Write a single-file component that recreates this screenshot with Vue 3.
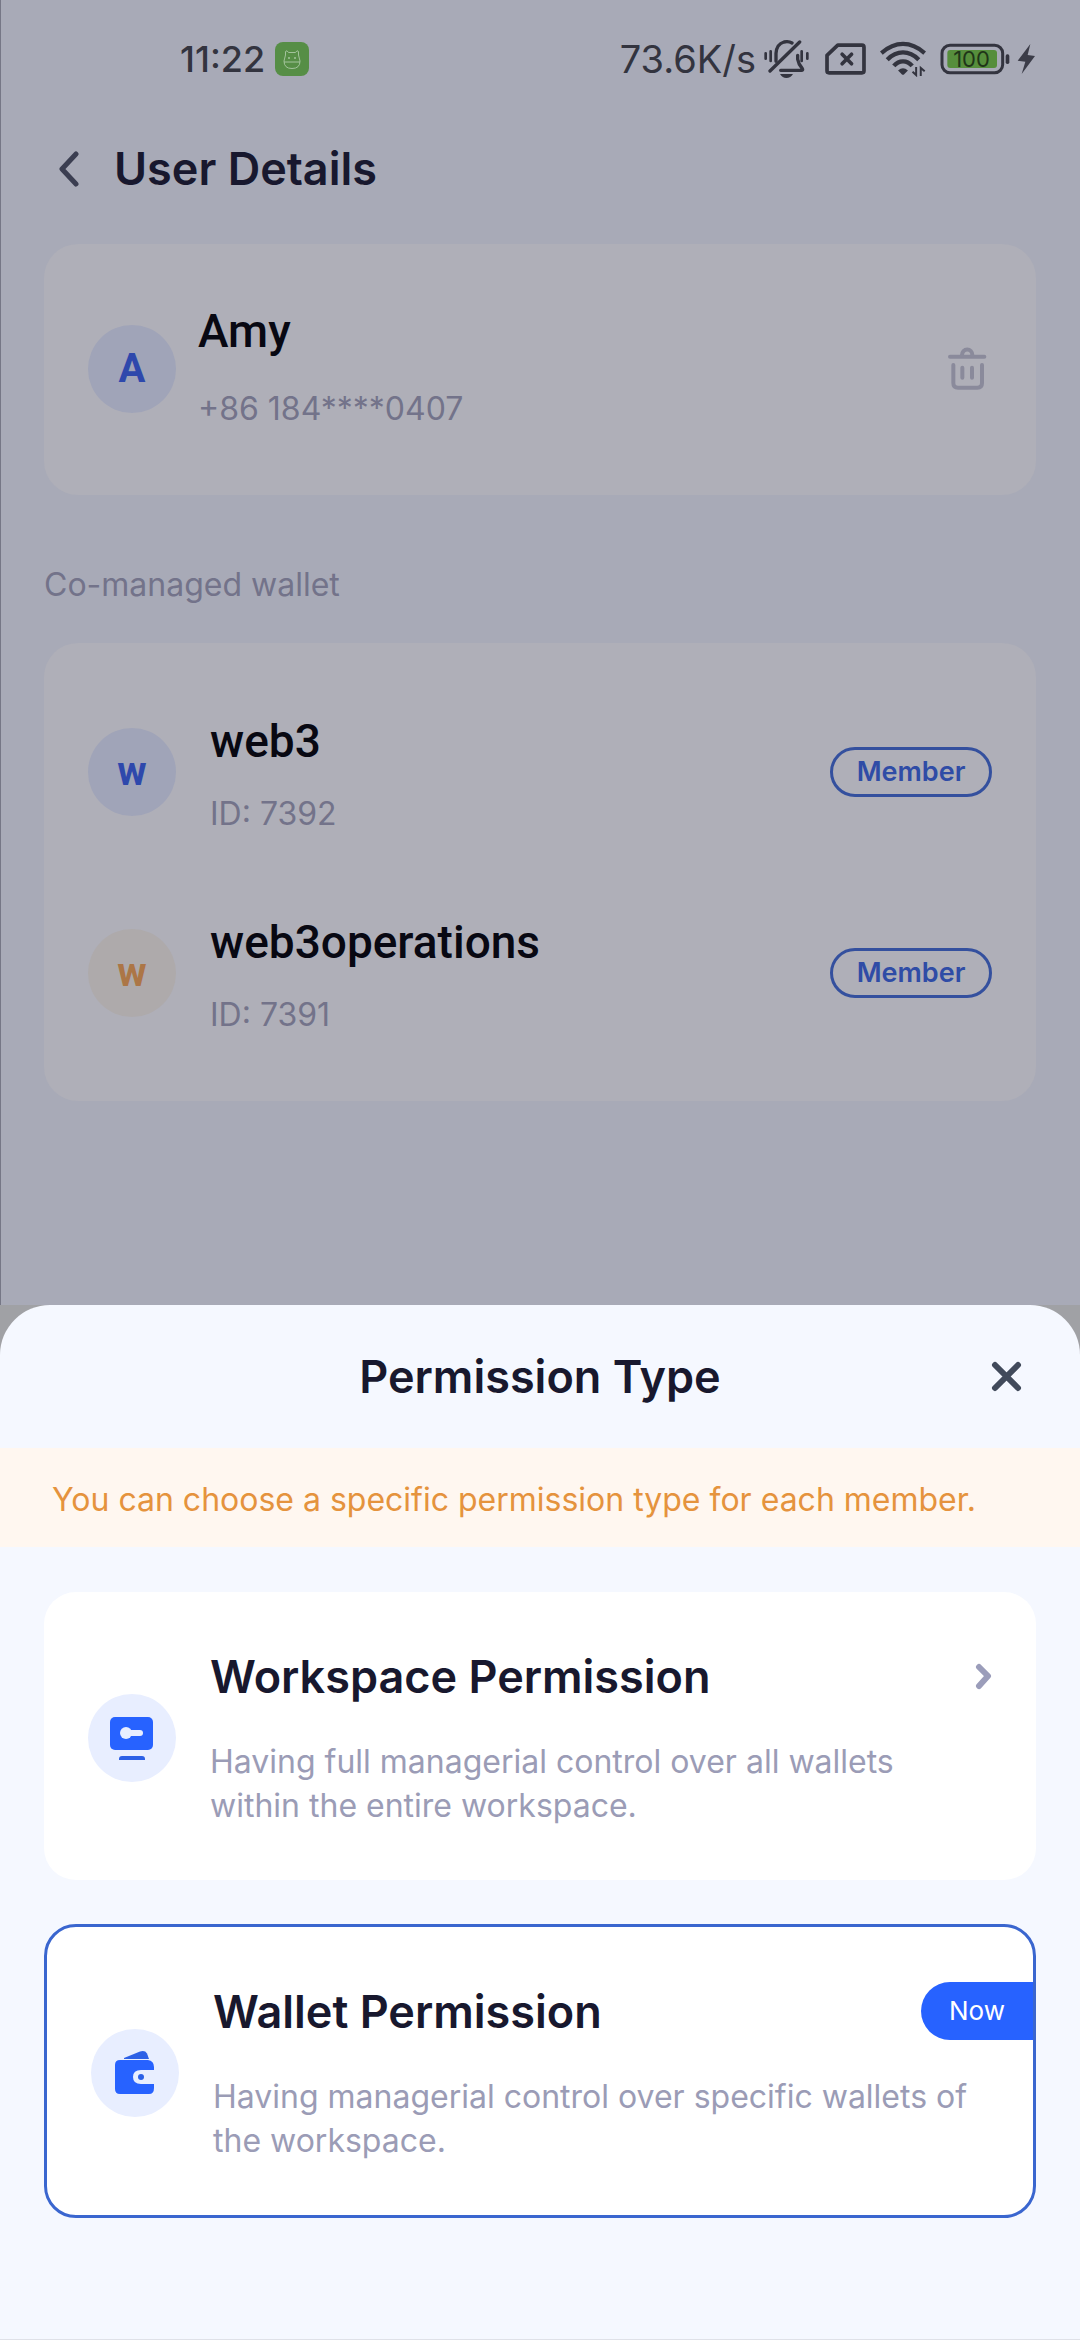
<script setup>
const wallets = [
  { name: 'web3', id: '7392', tone: 'blue' },
  { name: 'web3operations', id: '7391', tone: 'orange' },
]
</script>

<template>
  <div class="page">
    <main class="details">
      <div class="status">
        <div class="status-left">
          <span class="time">11:22</span>
          <svg class="app-icon" width="34" height="34" viewBox="0 0 34 34">
            <rect width="34" height="34" rx="8" fill="#568e46" />
            <g fill="none" stroke="#a3c39c" stroke-width="1">
              <path d="M10.500 13V9.500Q12 7.500 13.500 10.500H20.500Q22 7.500 23.500 9.500V13L25 19Q25 26.500 17 26.500Q9 26.500 9 19Z" />
              <path d="M9 20H25" />
            </g>
            <circle cx="14" cy="16" r="1" fill="#a3c39c" />
            <circle cx="20" cy="16" r="1" fill="#a3c39c" />
          </svg>
        </div>
        <div class="status-right">
          <span class="speed">73.6K/s</span>
          <svg class="bell" width="45" height="38" viewBox="0 0 135 114" fill="none" stroke="currentColor" stroke-width="10" stroke-linecap="round">
            <path d="M18 93L107 6" />
            <path d="M36 64V40Q38 12 60 6Q74 3 84 9" />
            <path d="M101 46V58Q103 72 115 86Q118 91 112 91H50" />
            <path d="M5 40V56M20 34V63M113 34V63M130 40V56" stroke-width="8" />
            <path d="M48 102H87Q80 114 67 114Q55 114 48 102Z" fill="currentColor" stroke="none" />
          </svg>
          <svg class="sim" width="41" height="32" viewBox="0 0 122 94" fill="none" stroke="currentColor" stroke-width="11" stroke-linejoin="round" stroke-linecap="round">
            <path d="M38 6H110Q116 6 116 12V82Q116 88 110 88H12Q6 88 6 82V36Z" />
            <path d="M51 33L79 61M79 33L51 61" />
          </svg>
          <svg class="wifi" width="46" height="36" viewBox="0 0 140 108" fill="none" stroke="currentColor" stroke-width="13">
            <path d="M4 36Q36 8 70 8Q104 8 136 36" />
            <path d="M22 56Q44 34 70 34Q96 34 118 56" />
            <path d="M42 75Q54 61 70 61Q86 61 98 75" />
            <path d="M55 89Q70 75 85 89L73 101Q70 103 67 101Z" fill="currentColor" stroke="none" />
            <path d="M110 78V103L99 93M124 106V81L136 91" stroke-width="6" />
          </svg>
          <span class="battery">
            <svg width="70" height="32" viewBox="0 0 210 96" fill="none">
              <rect x="6" y="7" width="182" height="82" rx="24" stroke="currentColor" stroke-width="9" />
              <rect x="22" y="21" width="149" height="54" rx="9" fill="#568e3c" />
              <rect x="197" y="34" width="11" height="29" rx="5" fill="currentColor" />
            </svg>
            <span class="level">100</span>
          </span>
          <svg class="bolt" width="18" height="30" viewBox="0 0 54 90" fill="currentColor">
            <path d="M40 0L2 50L25 53L14 90L54 36L32 33Z" />
          </svg>
        </div>
      </div>

      <header class="topbar">
        <button class="icon-button" aria-label="Back">
          <svg width="21" height="36" viewBox="0 0 21 36" fill="none" stroke="#3b3e51" stroke-width="5" stroke-linecap="round" stroke-linejoin="round">
            <path d="M18 3L4 18L18 33" />
          </svg>
        </button>
        <h1>User Details</h1>
      </header>

      <section class="card profile">
        <span class="avatar blue">A</span>
        <div class="profile-text">
          <p class="name">Amy</p>
          <p class="meta">+86 184****0407</p>
        </div>
        <button class="icon-button trash" aria-label="Delete user">
          <svg width="39" height="43" viewBox="0 0 117 129" fill="none" stroke="#8a8a9b" stroke-width="12" stroke-linecap="round">
            <path d="M6 29H109" />
            <path d="M42 27V24A15 16 0 0 1 73 24V27" />
            <path d="M16 54V108Q16 122 30 122H88Q102 122 102 108V54" />
            <path d="M43 62V92M72 62V92" />
          </svg>
        </button>
      </section>

      <h2 class="section-label">Co-managed wallet</h2>

      <ul class="card wallets">
        <li v-for="wallet in wallets" :key="wallet.id" class="wallet">
          <span class="avatar" :class="wallet.tone">w</span>
          <div class="wallet-text">
            <p class="name">{{ wallet.name }}</p>
            <p class="meta">ID: {{ wallet.id }}</p>
          </div>
          <span class="role">Member</span>
        </li>
      </ul>
    </main>

    <div class="sheet-area">
      <section class="sheet" role="dialog" aria-labelledby="sheet-title">
        <header class="sheet-head">
          <h2 id="sheet-title">Permission Type</h2>
          <button class="icon-button" aria-label="Close">
            <svg width="31" height="31" viewBox="0 0 31 31" fill="none" stroke="#414a5b" stroke-width="6" stroke-linecap="round">
              <path d="M4 4L27 27M27 4L4 27" />
            </svg>
          </button>
        </header>
        <p class="notice">You can choose a specific permission type for each member.</p>
        <div class="options">
          <button class="option">
            <svg class="badge-icon" width="88" height="88" viewBox="0 0 88 88">
              <circle cx="44" cy="44" r="44" fill="#e8eeff" />
              <rect x="22" y="23" width="43" height="33" rx="5" fill="#2762ff" />
              <path d="M31 66V65Q31 62 34 62H54Q57 62 57 65V66Z" fill="#2c60e6" />
              <circle cx="38" cy="39" r="6" fill="#e8eeff" />
              <path d="M40 39H52" stroke="#e8eeff" stroke-width="6" stroke-linecap="round" />
            </svg>
            <span class="option-text">
              <span class="option-head">
                <span class="option-title">Workspace Permission</span>
                <svg class="chevron" width="17" height="27" viewBox="0 0 17 27" fill="none" stroke="#9b9dba" stroke-width="6" stroke-linecap="round" stroke-linejoin="round">
                  <path d="M4 4L13 13L4 23" />
                </svg>
              </span>
              <span class="option-desc">Having full managerial control over all wallets within the entire workspace.</span>
            </span>
          </button>
          <button class="option current">
            <svg class="badge-icon" width="88" height="88" viewBox="0 0 88 88">
              <circle cx="44" cy="44" r="44" fill="#e8eeff" />
              <path d="M33 29L49 22.500Q54 21 56 24.500L58 30H33Z" fill="#2c60e6" />
              <path d="M29 31H57Q63 32 63 38V41H50Q42 41 42 48Q42 55 50 55H63V59Q63 65 58 65H29Q24 65 24 60V36Q24 31 29 31Z" fill="#2762ff" />
              <circle cx="50" cy="48" r="3" fill="#2c60e6" />
            </svg>
            <span class="option-text">
              <span class="option-head">
                <span class="option-title">Wallet Permission</span>
                <span class="now">Now</span>
              </span>
              <span class="option-desc">Having managerial control over specific wallets of the workspace.</span>
            </span>
          </button>
        </div>
      </section>
    </div>
  </div>
</template>

<style>
body {
  margin: 0;
}
</style>

<style scoped>
.page {
  display: flex;
  flex-direction: column;
  min-height: 100vh;
  font-family: Inter, "Liberation Sans", sans-serif;
  background: #a8aab7;
}

h1,
h2,
p,
ul {
  margin: 0;
  padding: 0;
}

svg {
  display: block;
  flex: none;
}

button {
  margin: 0;
  padding: 0;
  border: 0;
  background: none;
  font: inherit;
  text-align: left;
  cursor: pointer;
}

.details {
  box-sizing: border-box;
  flex: 1;
  padding: 0 44px 44px;
  background: #a8aab7;
  box-shadow: inset 1px 0 #767786;
}

.status {
  display: flex;
  align-items: center;
  justify-content: space-between;
  height: 118px;
  color: #33343f;
}

.status-left,
.status-right {
  display: flex;
  align-items: center;
}

.status-left {
  gap: 10px;
  padding-left: 136px;
}

.time {
  font-size: 36px;
  font-weight: 500;
}

.speed {
  margin-right: 8px;
  font-size: 38px;
}

.bell {
  margin-right: 16px;
}

.sim {
  margin-right: 14px;
}

.wifi {
  margin-right: 14px;
}

.battery {
  display: grid;
  align-items: center;
  margin-right: 7px;
}

.battery > * {
  grid-area: 1 / 1;
}

.level {
  padding-right: 7px;
  font-size: 22px;
  line-height: 32px;
  text-align: center;
  color: #1f3518;
}

.bolt {
  margin-right: 1px;
  color: #3b3c48;
}

.topbar {
  display: flex;
  align-items: center;
  gap: 35px;
  height: 102px;
  padding-left: 14px;
}

.topbar h1 {
  font-size: 45px;
  font-weight: 560;
  line-height: 56px;
  color: #18182e;
}

.card {
  padding-left: 44px;
  padding-right: 44px;
  border-radius: 34px;
  background: #afafb8;
}

.profile {
  display: flex;
  align-items: center;
  gap: 22px;
  margin-top: 24px;
  padding-top: 60px;
  padding-bottom: 62px;
}

.profile-text {
  flex: 1;
}

.avatar {
  flex: none;
  width: 88px;
  height: 88px;
  border-radius: 50%;
  font-family: Roboto, sans-serif;
  font-size: 40px;
  font-weight: 700;
  line-height: 88px;
  text-align: center;
}

.avatar.blue {
  background: #a0a4b8;
  color: #2e48ac;
}

.avatar.orange {
  background: #aeaaab;
  color: #ac7646;
}

.name {
  font-family: Roboto, sans-serif;
  font-size: 46px;
  font-weight: 500;
  line-height: 54px;
  color: #080812;
}

.meta {
  font-size: 32px;
  line-height: 48px;
  color: #73738a;
}

.profile .meta {
  margin-top: 27px;
}

.trash {
  margin-right: 5px;
}

.section-label {
  margin: 68px 0 36px;
  font-size: 32px;
  font-weight: 400;
  line-height: 44px;
  color: #73738a;
}

.wallets {
  padding-top: 28px;
  padding-bottom: 28px;
  list-style: none;
}

.wallet {
  display: flex;
  align-items: center;
  gap: 34px;
  height: 201px;
}

.wallet-text {
  flex: 1;
  padding-top: 8px;
}

.wallet .meta {
  margin-top: 22px;
}

.role {
  box-sizing: border-box;
  width: 162px;
  border: 3px solid #34509e;
  border-radius: 25px;
  font-size: 27px;
  font-weight: 600;
  line-height: 44px;
  text-align: center;
  color: #2f4ca6;
}

.sheet-area {
  background: #a0a1a5;
}

.sheet {
  border-bottom: 1px solid #dfe1e8;
  border-radius: 50px 50px 0 0;
  background: #f5f8ff;
}

.sheet-head {
  display: grid;
  grid-template-columns: 1fr auto 1fr;
  align-items: center;
  height: 143px;
  padding: 0 58px;
}

.sheet-head h2 {
  grid-column: 2;
  font-size: 45px;
  font-weight: 560;
  line-height: 56px;
  color: #18182e;
}

.sheet-head .icon-button {
  justify-self: end;
}

.notice {
  padding: 28px 52px 23px;
  font-size: 32px;
  line-height: 48px;
  color: #e5933d;
  background: #fff7f0;
}

.options {
  display: flex;
  flex-direction: column;
  gap: 44px;
  padding: 45px 44px 121px;
}

.option {
  display: flex;
  align-items: center;
  gap: 34px;
  padding: 55px 44px 52px;
  border-radius: 32px;
  background: #fff;
}

.option.current {
  border: 3px solid #3a66cf;
}

.option-text {
  display: flex;
  flex: 1;
  flex-direction: column;
  gap: 35px;
}

.option-head {
  display: flex;
  align-items: center;
  justify-content: space-between;
  height: 58px;
}

.option-title {
  font-size: 45px;
  font-weight: 560;
  color: #18182e;
}

.option-desc {
  padding-right: 12px;
  font-size: 32px;
  line-height: 44px;
  color: #9b9cb6;
}

.now {
  margin-right: -44px;
  padding: 0 28px;
  border-radius: 29px 0 0 29px;
  font-size: 26px;
  line-height: 58px;
  color: #fff;
  background: #2762ff;
}
</style>
